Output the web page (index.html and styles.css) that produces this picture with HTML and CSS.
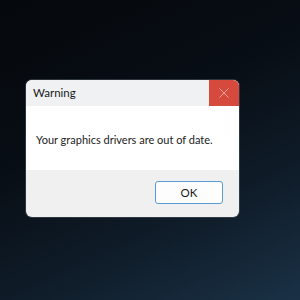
FILE: index.html
```html
<!DOCTYPE html>
<html lang="en">
<head>
    <meta charset="UTF-8">
    <title>Warning</title>
    <link rel="stylesheet" href="styles.css">
</head>
<body>
    <div class="desktop">
        <div class="dialog">
            <div class="titlebar">
                <span class="title">Warning</span>
                <button class="close" aria-label="Close">
                    <svg width="10" height="10" viewBox="0 0 10 10">
                        <path d="M0.5 0.5 L9.5 9.5 M9.5 0.5 L0.5 9.5" stroke="#eea29a" stroke-width="1" fill="none"/>
                    </svg>
                </button>
            </div>
            <div class="message">Your graphics drivers are out of date.</div>
            <div class="footer">
                <button class="ok">OK</button>
            </div>
        </div>
    </div>
</body>
</html>
```

FILE: styles.css
```css
html, body {
    margin: 0;
    padding: 0;
}
.desktop {
    width: 300px;
    height: 300px;
    background: linear-gradient(155deg, #05080c 0%, #080e15 40%, #0f1c29 70%, #1a3145 100%);
    padding: 80px 0 0 26px;
    box-sizing: border-box;
    font-family: Lato, "Noto Sans", sans-serif;
}
.dialog {
    width: 213px;
    border-radius: 6px;
    overflow: hidden;
    background: #f0f0f0;
    box-shadow: 0 0 0 1px rgba(80, 90, 100, 0.5);
}
.titlebar {
    display: flex;
    height: 26px;
    background: #eff1f3;
}
.title {
    flex: 1;
    padding: 6px 0 0 7px;
    font-size: 11.5px;
    color: #1a1a1a;
}
.close {
    width: 30px;
    height: 26px;
    border: none;
    padding: 0;
    background: #d64a3d;
    display: flex;
    align-items: center;
    justify-content: center;
}
.message {
    height: 64px;
    background: #ffffff;
    padding: 27px 0 0 10px;
    box-sizing: border-box;
    font-size: 11px;
    color: #222;
}
.footer {
    height: 47px;
    display: flex;
    justify-content: flex-end;
    padding: 11px 16px 0 0;
    box-sizing: border-box;
}
.ok {
    width: 68px;
    height: 23px;
    border: 1px solid #5b9bd5;
    border-radius: 3px;
    background: #fdfdfd;
    font-family: inherit;
    font-size: 11.5px;
    color: #1a1a1a;
    padding: 0;
}
```
